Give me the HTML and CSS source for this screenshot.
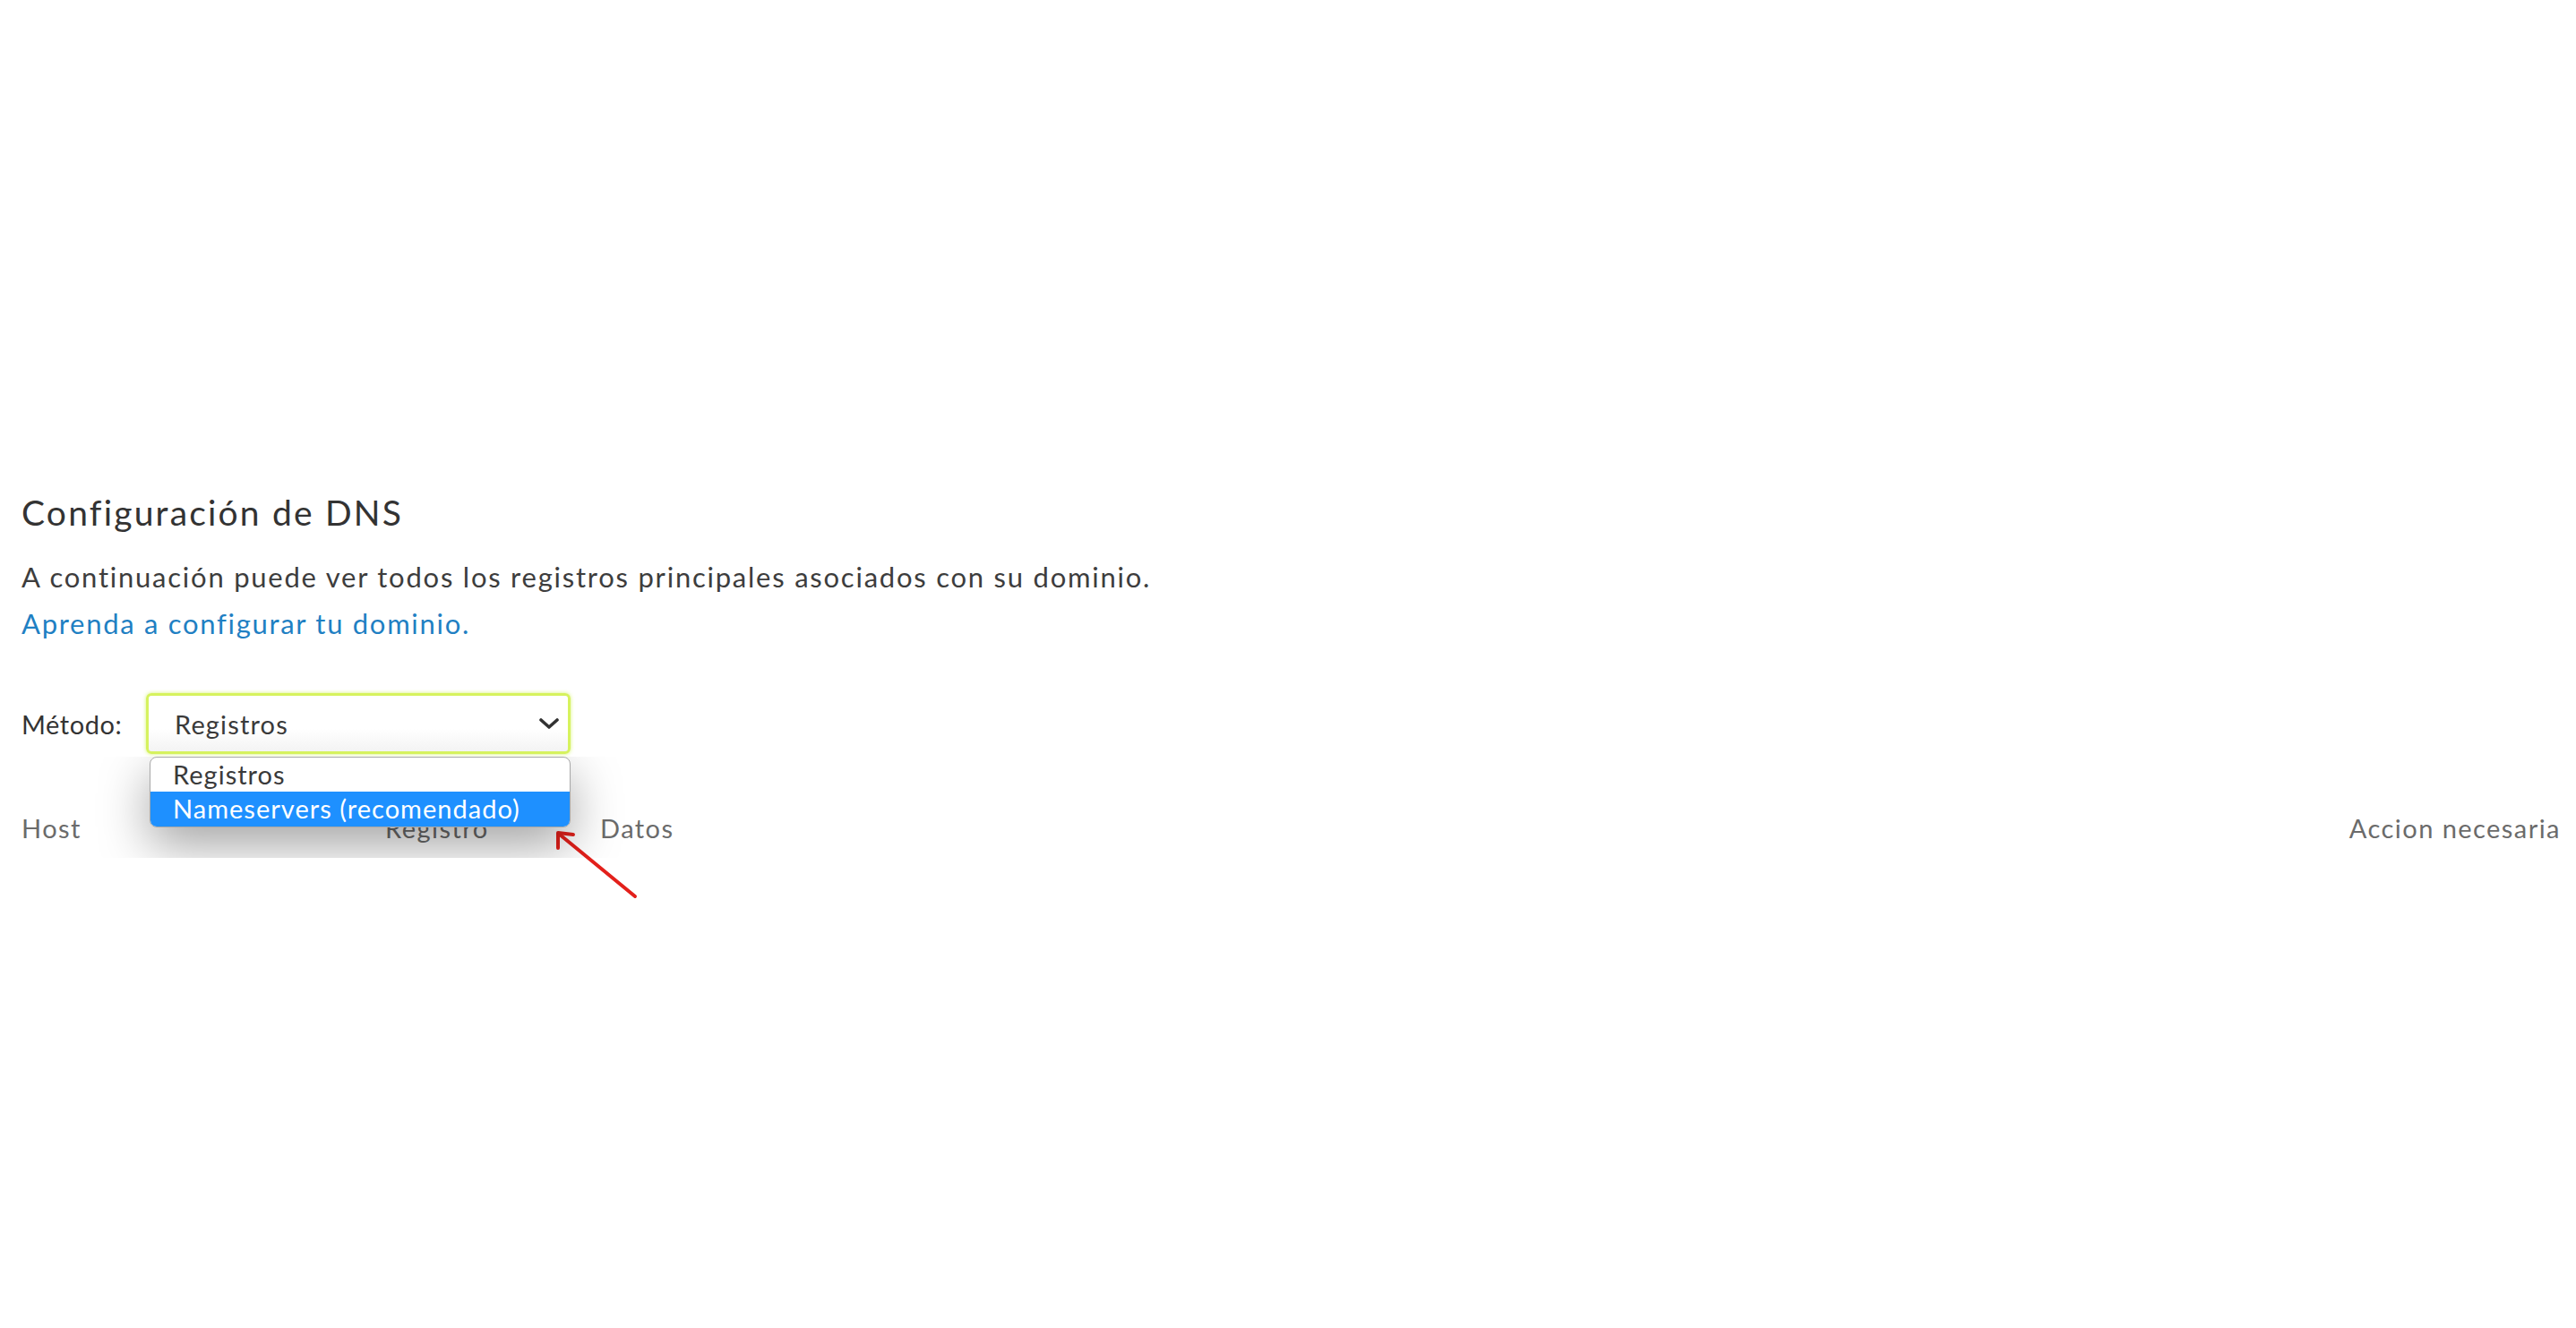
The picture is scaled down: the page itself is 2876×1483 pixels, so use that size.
FILE: index.html
```html
<!DOCTYPE html>
<html lang="es">
<head>
<meta charset="utf-8">
<title>Configuración de DNS</title>
<link rel="stylesheet" href="styles.css">
</head>
<body>
<main class="page">
  <h1 class="title">Configuración de DNS</h1>
  <p class="intro">A continuación puede ver todos los registros principales asociados con su dominio.</p>
  <a class="learn" href="#">Aprenda a configurar tu dominio.</a>

  <div class="method">
    <span class="method-label">Método:</span>
    <div class="select-wrap">
      <div class="select">
        <span class="select-value">Registros</span>
        <svg class="chevron" viewBox="0 0 22 12" width="22" height="12"><path d="M2 2 L11 10 L20 2" fill="none" stroke="#333" stroke-width="3.6" stroke-linecap="round" stroke-linejoin="round"/></svg>
      </div>
      <div class="popup">
        <ul class="options">
          <li class="option">Registros</li>
          <li class="option selected">Nameservers (recomendado)</li>
        </ul>
      </div>
    </div>
  </div>

  <div class="table-head">
    <span class="col col-host">Host</span>
    <span class="col col-reg">Registro</span>
    <span class="col col-data">Datos</span>
    <span class="col col-action">Accion necesaria</span>
  </div>

  <svg class="arrow" viewBox="0 0 110 90" width="110" height="90">
    <path d="M98 82 L14 13" fill="none" stroke="#e3201b" stroke-width="4" stroke-linecap="round"/>
    <path d="M12 28 L12 11 L29 13" fill="none" stroke="#e3201b" stroke-width="4" stroke-linecap="round" stroke-linejoin="round"/>
  </svg>
</main>
</body>
</html>
```

FILE: styles.css
```css
html, body {
  margin: 0;
  padding: 0;
  background: #ffffff;
}

body {
  width: 2876px;
  height: 1483px;
  overflow: hidden;
  font-family: Lato, "Open Sans", "Liberation Sans", sans-serif;
  color: #3a3a3a;
}

.page {
  position: relative;
  padding: 548px 17px 0 24px;
}

.title {
  margin: 0;
  font-size: 39px;
  line-height: 48px;
  font-weight: 400;
  letter-spacing: 0.056em;
  color: #333333;
}

.intro {
  margin: 28px 0 0;
  font-size: 31px;
  line-height: 40px;
  letter-spacing: 0.057em;
  color: #3d3d3d;
}

.learn {
  display: block;
  margin-top: 12px;
  font-size: 31px;
  line-height: 40px;
  letter-spacing: 0.055em;
  color: #1f80c3;
  text-decoration: none;
}

.method {
  display: flex;
  align-items: center;
  margin-top: 58px;
}

.method-label {
  width: 139px;
  font-size: 29px;
  letter-spacing: 0.02em;
  color: #333333;
}

.select-wrap {
  position: relative;
}

.select {
  box-sizing: border-box;
  width: 474px;
  height: 68px;
  display: flex;
  align-items: center;
  justify-content: space-between;
  padding: 0 10px 0 29px;
  border: 3px solid #d6f25e;
  border-radius: 6px;
  background: linear-gradient(#ffffff 60%, #f3f3f3);
  box-shadow: 0 0 4px rgba(200, 240, 60, 0.7);
}

.select-value {
  font-size: 29px;
  letter-spacing: 0.04em;
  color: #3a3a3a;
}

.chevron {
  display: block;
}

.popup {
  position: absolute;
  top: 71px;
  left: -163px;
  width: 900px;
  height: 113px;
  overflow: hidden;
  z-index: 5;
}

.options {
  list-style: none;
  margin: 0 0 0 167px;
  padding: 0;
  width: 470px;
  border: 1px solid #a8a8a8;
  border-radius: 8px;
  overflow: hidden;
  background: #ffffff;
  box-shadow: 0 20px 55px rgba(0, 0, 0, 0.36);
  box-sizing: border-box;
}

.option {
  height: 38px;
  line-height: 38px;
  padding-left: 25px;
  font-size: 29px;
  letter-spacing: 0.035em;
  color: #3a3a3a;
}

.option.selected {
  height: 39px;
  background: #1e90ff;
  color: #ffffff;
}

.table-head {
  display: flex;
  align-items: center;
  margin-top: 65px;
  font-size: 29px;
  letter-spacing: 0.05em;
  color: #6b6b6b;
}

.col-host { width: 406px; }
.col-reg { width: 240px; }
.col-data { flex: 1; }
.col-action { text-align: right; }

.arrow {
  position: absolute;
  left: 611px;
  top: 919px;
}
```
